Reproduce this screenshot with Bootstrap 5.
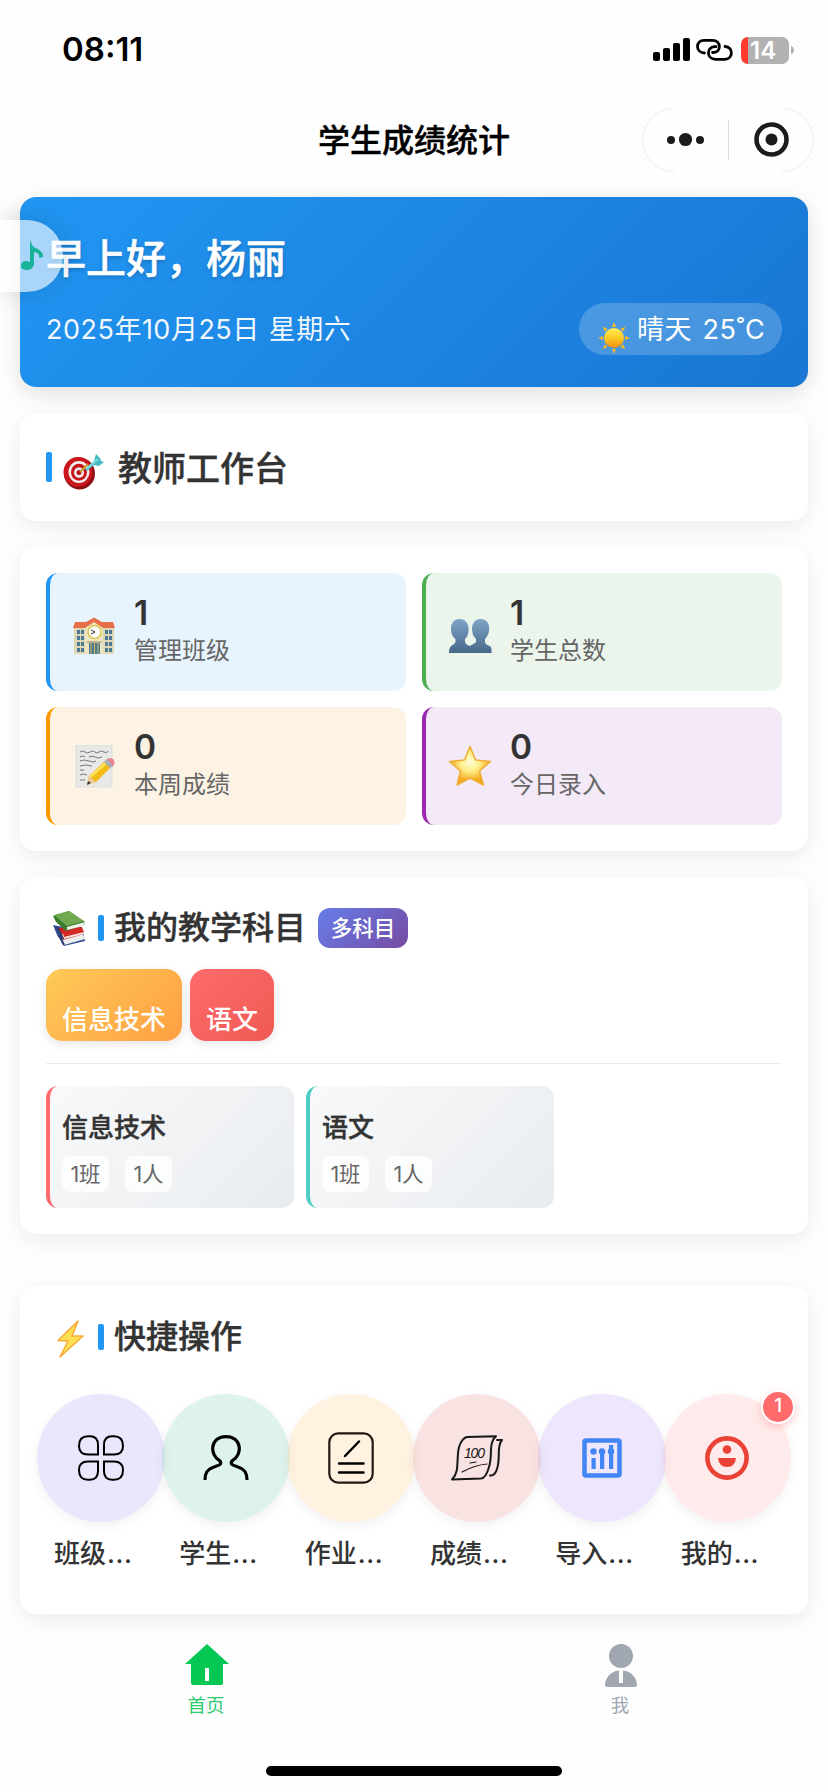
<!DOCTYPE html>
<html lang="zh-CN">
<head>
<meta charset="utf-8">
<meta name="viewport" content="width=device-width, initial-scale=1">
<title>学生成绩统计</title>
<link href="https://cdn.jsdelivr.net/npm/bootstrap@5.3.0/dist/css/bootstrap.min.css" rel="stylesheet">
<style>
body{font-family:Inter,"Noto Sans CJK SC",sans-serif;color:#333;background:#fefefe;width:828px;height:1792px;overflow:hidden;line-height:1}
svg{display:block;flex:none}
.status-bar{height:108px;padding:24px 34px 0 62px;color:#000}
.clock{font-size:33px;font-weight:600;line-height:51px;letter-spacing:0}
.status-icons{height:52px}
.link-mark{margin:0 6px 0 4px}
.battery-box{width:48px;height:27px;border-radius:7px;background:linear-gradient(90deg,#ff3b30 7px,#b2b2b2 7px);color:#fff;font-weight:600;font-size:24px;line-height:27px;padding-left:9px}
.title-bar{height:64px;padding-right:14px;display:grid;grid-template-columns:186px 1fr 172px;color:#000}
.page-title{font-size:32px;font-weight:500;-webkit-text-stroke:.4px;line-height:65px;text-align:center}
.panel{margin:0 20px 26px;border-radius:16px;padding:26px;background:#fff;box-shadow:0 6px 22px rgba(0,0,0,.075)}
.hero{margin-top:25px;height:190px;background:linear-gradient(135deg,#2196f3,#1976d2);color:#fff;box-shadow:0 6px 22px rgba(0,0,0,.13)}
.hello{font-size:40px;font-weight:500;-webkit-text-stroke:.5px;line-height:72px;text-shadow:0 2px 4px rgba(0,0,0,.22)}
.hero-date{font-size:27px;letter-spacing:.5px;word-spacing:1px;line-height:53px;margin-top:8px;color:rgba(255,255,255,.95)}
.weather{width:203px;height:52px;border-radius:26px;background:rgba(255,255,255,.2);font-size:27px;letter-spacing:.6px;word-spacing:2px;line-height:53px;padding-left:18px;margin-top:8px;white-space:nowrap}
.weather svg{margin:18px 6px 0 0}
.music-tab{left:0;top:220px;width:63px;height:72px;border-radius:0 36px 36px 0;background:rgba(255,255,255,.61);box-shadow:0 0 28px rgba(0,0,0,.13);padding:19px 0 0 20px}
.accent{width:6px;height:26px;border-radius:2px;background:#2196f3;flex:none}
.accent-lg{height:30px}
.head{height:50px;font-size:32px;font-weight:500;-webkit-text-stroke:.4px}
.head-lg{font-size:34px;line-height:50px;padding-top:2px}
.target-icon{margin:10px 12px 0 10px}
.stat-grid{display:grid;grid-template-columns:360px 360px;gap:16px}
.stat{height:118px;border-left:4px solid var(--c);border-radius:12px;background:var(--b);padding:20px 0 0 22px}
.stat svg{margin:18px 18px 0 0}
.stat svg.low{margin-top:20px}
.stat b{display:block;font-size:33.5px;font-weight:600;line-height:40px}
.stat span{display:block;font-size:24px;line-height:36px;color:#666}
.multi{width:90px;height:40px;border-radius:12px;background:linear-gradient(135deg,#667eea,#764ba2);color:#fff;font-size:21.5px;font-weight:500;-webkit-text-stroke:0;line-height:40px;text-align:center;margin-left:12px}
.subject-tag{height:72px;padding:33px 16px 0;border-radius:16px;color:#fff;font-size:26px;font-weight:500;line-height:36px;box-shadow:0 3px 10px rgba(0,0,0,.1)}
.t-info{background:linear-gradient(135deg,#feca57,#ff9f43)}
.t-lang{background:linear-gradient(135deg,#ff6b6b,#ee5a52)}
.rule{height:1px;background:#ececec;margin:22px 0}
.course{width:248px;height:122px;border-left:4px solid var(--c);border-radius:12px;background:linear-gradient(135deg,#f8f9fa,#e9ecef);padding:22px 12px 0}
.course h3{font-size:26px;font-weight:500;-webkit-text-stroke:.4px;line-height:39px;margin:0 0 9px}
.chip{width:47px;height:36px;border-radius:8px;background:rgba(255,255,255,.8);color:#666;font-size:21.5px;line-height:36px;text-align:center;white-space:nowrap}
.quick{padding:26px 18px 43px}
.quick-row{margin-top:32px}
.disc{width:128px;height:128px;border-radius:50%;margin:0 -1.5px;flex:none;box-shadow:0 4px 12px rgba(0,0,0,.055);background:var(--b)}
.quick-label{font-size:26px;font-weight:500;line-height:37px;height:36px;margin:13px 0 0 16px;align-self:flex-start}
.quick-label i{font-style:normal;letter-spacing:.6px;margin-left:1px}
.note-badge{right:-4px;top:-4px;width:34px;height:34px;border:2px solid #fff;border-radius:50%;background:#ff6b6b;color:#fff;font-size:19px;line-height:28px;font-weight:500;text-align:center;box-shadow:0 3px 8px rgba(255,107,107,.35)}
.tabs{height:152px;padding-top:4px;margin-top:26px}
.tab-item{width:414px;height:98px;font-size:18.5px;line-height:26px}
.tab-item span{margin:6px 2px 0 0}
.tab-item svg+span.me-tab{margin-top:5px}
.home-line{width:296px;height:10px;border-radius:5px;background:#000;margin:24px auto 0}
</style>
</head>
<body class="position-relative">
<header>
  <div class="status-bar d-flex justify-content-between">
    <div class="clock">08:11</div>
    <div class="status-icons d-flex align-items-center">
      <svg width="38" height="24" viewBox="0 0 38 24"><rect x="0" y="14" width="7" height="9" rx="2"/><rect x="10" y="10" width="7" height="13" rx="2"/><rect x="20" y="5" width="7" height="18" rx="2"/><rect x="30" y="0" width="7" height="23" rx="2"/></svg>
      <svg class="link-mark" width="40" height="24" viewBox="0 0 40 24" fill="none" stroke="#000" stroke-width="2.800" stroke-linecap="round"><path d="M9.500 15C0 14.500 .5 2.300 9 2.300H17.500C26.500 2.300 26.500 14.500 18.500 14.500H17.500"/><path d="M30 8.500C39 9 38 21.300 30 21.300H20.500C11.500 21.300 11 9 19.500 8.700H21"/></svg>
      <div class="battery-box">14</div>
      <svg width="5" height="10" viewBox="0 0 5 10"><path d="M2 1Q5 2 5 5T2 9Z" fill="#b2b2b2"/></svg>
    </div>
  </div>
  <div class="title-bar">
    <div></div>
    <div class="page-title">学生成绩统计</div>
    <svg width="172" height="64" viewBox="0 0 172 64"><g fill="none" stroke="#ececec"><path d="M32 .5A31.500 31.500 0 0 0 32 63.500M140 .5A31.500 31.500 0 0 1 140 63.500"/><path d="M86.500 12V52" stroke="#ddd"/></g><g fill="#1b1b1b"><circle cx="29" cy="32" r="4"/><circle cx="43.500" cy="31.500" r="6.600"/><circle cx="58" cy="32" r="4"/><circle cx="129.500" cy="31.500" r="6"/></g><circle cx="129.500" cy="31.500" r="15" fill="none" stroke="#1b1b1b" stroke-width="4.600"/></svg>
  </div>
</header>

<section class="panel hero">
  <div class="hello">早上好，杨丽</div>
  <div class="d-flex justify-content-between">
    <div class="hero-date">2025年10月25日 星期六</div>
    <div class="weather d-flex">
      <svg width="34" height="34" viewBox="0 0 34 34"><defs><linearGradient id="sun" x2="0" y2="1"><stop stop-color="#ffef55"/><stop offset=".5" stop-color="#fdca25"/><stop offset="1" stop-color="#f18b13"/></linearGradient></defs><g fill="#f6b72a"><path id="ray" d="M17 1l2 5h-4z"/><use href="#ray" transform="rotate(45 17 17)"/><use href="#ray" transform="rotate(90 17 17)"/><use href="#ray" transform="rotate(135 17 17)"/><use href="#ray" transform="rotate(180 17 17)"/><use href="#ray" transform="rotate(225 17 17)"/><use href="#ray" transform="rotate(270 17 17)"/><use href="#ray" transform="rotate(315 17 17)"/></g><circle cx="17" cy="17" r="10" fill="url(#sun)"/></svg>
      <span>晴天 25˚C</span>
    </div>
  </div>
</section>

<section class="panel d-flex align-items-center" style="height:108px">
  <div class="accent accent-lg"></div>
  <svg class="target-icon" width="44" height="38" viewBox="0 0 44 38"><ellipse cx="17.500" cy="20.500" rx="15.500" ry="16" fill="#8c1014"/><ellipse cx="16" cy="19" rx="14.500" ry="15" fill="#c9151c"/><ellipse cx="17" cy="19" rx="10.500" ry="11" fill="#f5eeee"/><ellipse cx="17" cy="19.300" rx="8" ry="8.500" fill="#c9151c"/><ellipse cx="17" cy="19.500" rx="5" ry="5.300" fill="#f5eeee"/><circle cx="17" cy="19.500" r="2.500" fill="#b5121a"/><path d="M18 19L26 11" stroke="#c99b2c" stroke-width="2"/><path d="M23 16L32 8L34 1L38 5L39 8L42 9L37 13L32 12L25 18Z" fill="#46b9c1"/><path d="M24 16L36 6" stroke="#82e0df" stroke-width="2"/></svg>
  <div class="head head-lg">教师工作台</div>
</section>

<section class="panel stat-grid">
  <div class="stat d-flex" style="--c:#2196f3;--b:#e7f4fe">
    <svg class="low" width="44" height="48" viewBox="0 0 44 48"><path d="M2 14H42V41H2Z" fill="#ded7b5"/><path d="M13 13L22 6L31 13V41H13Z" fill="#eee6c2"/><path d="M3 9H14L22 4.500L30 9H41L43 15H31L22 9L13 15H1Z" fill="#e66f49"/><g fill="#4b7895"><path d="M5 17h3v4H5zM9 17h3v4H9zM5 23h3v4H5zM9 23h3v4H9zM5 29h3v4H5zM9 29h3v4H9zM5 35h3v4H5zM9 35h3v4H9zM33 17h3v4h-3zM37 17h3v4h-3zM33 23h3v4h-3zM37 23h3v4h-3zM33 29h3v4h-3zM37 29h3v4h-3zM33 35h3v4h-3zM37 35h3v4h-3z"/><path d="M17 30H28V41H17Z"/></g><path d="M22.500 30V41M19 30V41M26 30V41" stroke="#d8b960"/><path d="M15 29H30" stroke="#bdb48b" stroke-width="2"/><circle cx="22.500" cy="19" r="6.500" fill="#fff" stroke="#dcc84e" stroke-width="1.500"/><path d="M19 17L23 19L19 21" fill="none" stroke="#333"/></svg>
    <div><b>1</b><span>管理班级</span></div>
  </div>
  <div class="stat d-flex" style="--c:#4caf50;--b:#ebf5eb">
    <svg class="low" width="44" height="48" viewBox="0 0 44 48"><defs><linearGradient id="people" x2="0" y2="1"><stop stop-color="#7da5c7"/><stop offset="1" stop-color="#476789"/></linearGradient></defs><g fill="url(#people)"><path d="M33 6C26.500 6 24 11 24 16C24 21 26 24 28 26V29C25 33 17 32 17 40H43.500V36C43 31 38 34 37 29V26C43 21 43.500 6 33 6Z"/><path d="M12 6C5 6 3 11 3 16C3 21 5 24 7.500 26V29C6 33 1 31 1 40H28.500V38C27 32 18 34 17 29V26C23 21 22 6 12 6Z"/></g></svg>
    <div><b>1</b><span>学生总数</span></div>
  </div>
  <div class="stat d-flex" style="--c:#ff9800;--b:#fdf3e5">
    <svg width="44" height="48" viewBox="0 0 44 48"><path d="M4 0H40V42H4Z" fill="#e8e8e7" stroke="#d5d5d2" stroke-width=".7"/><g fill="none" stroke="#777" stroke-width="1"><path d="M8 7q3-2 5 0t5 0 5 0 4 0 5 0 4-1"/><path d="M8 12q2-2 5 0m4 0q3-2 6 0t7 0M8 16q4-2 9 0t7 0M8 21q5-2 12 0M8 25h4M8 30q3-2 7 0M8 35h5"/></g><path d="M15 40L17 31L34 15L40 21L24 37Z" fill="#f4bb15"/><path d="M18 32L35 17" stroke="#ffe25b" stroke-width="2.500"/><path d="M34 15L37 13Q44 13 42 20L40 22Z" fill="#e88790"/><path d="M32 17L35 14L41 21L38 23Z" fill="#a7b0b8"/><path d="M15 40L17 31L24 37Z" fill="#edc99a"/><path d="M15 40L16 36L19 38Z" fill="#333"/></svg>
    <div><b>0</b><span>本周成绩</span></div>
  </div>
  <div class="stat d-flex" style="--c:#9c27b0;--b:#f4e9f7">
    <svg width="44" height="48" viewBox="0 0 44 48"><defs><radialGradient id="star" cy=".4"><stop stop-color="#fffbd9"/><stop offset=".45" stop-color="#fff18e"/><stop offset="1" stop-color="#f3a91e"/></radialGradient></defs><path d="M22 1.500L27.500 15L42.500 16.500L31.500 26L35.500 40L22 33L9 40L12.500 26L1.500 16.500L16.500 15Z" fill="url(#star)" stroke="#efad32" stroke-width="1.500" stroke-linejoin="round"/></svg>
    <div><b>0</b><span>今日录入</span></div>
  </div>
</section>

<section class="panel" style="height:357px;margin-bottom:52px">
  <div class="head d-flex align-items-center">
    <svg style="margin:1px 10px 0 6px" width="36" height="36" viewBox="0 0 36 36"><path d="M1 14L5 24L12 35L33 30L31 20Z" fill="#354f91"/><path d="M7 27L31 23L33 28L12 34Z" fill="#eee"/><path d="M5 17L30 16L32 23L11 29Z" fill="#c52520"/><path d="M10 23L31 19L32 23L12 28Z" fill="#f3e9e2"/><path d="M10 18L30 17L32 21L12 26Z" fill="#d22a24"/><path d="M7 24L12 34M5 16L11 28" stroke="#2b3b75" stroke-width="2"/><path d="M1 5L17 0L33 11L32 14L14 20L4 11Z" fill="#3a7b2e"/><path d="M2 4L17 0L32 10L15 15Z" fill="#6faa50"/><path d="M15 16L33 11L31 15L15 19Z" fill="#f4f4e8"/></svg>
    <div class="accent"></div>
    <span style="margin-left:10px">我的教学科目</span>
    <div class="multi">多科目</div>
  </div>
  <div class="d-flex gap-2 mt-3">
    <div class="subject-tag t-info">信息技术</div>
    <div class="subject-tag t-lang">语文</div>
  </div>
  <div class="rule"></div>
  <div class="d-flex" style="gap:12px">
    <div class="course" style="--c:#ff6b6b"><h3>信息技术</h3><div class="d-flex gap-3"><span class="chip">1班</span><span class="chip">1人</span></div></div>
    <div class="course" style="--c:#4ecdc4"><h3>语文</h3><div class="d-flex gap-3"><span class="chip">1班</span><span class="chip">1人</span></div></div>
  </div>
</section>

<section class="panel quick mb-0">
  <div class="head d-flex align-items-center ps-2">
    <svg style="margin:3px 13px 0 9px" width="30" height="40" viewBox="0 0 30 40"><path d="M23 2L3 21.500L13 22L5 38L28 17L17 17Z" fill="#ffe052" stroke="#f7aa35" stroke-width="1.500" stroke-linejoin="round"/></svg>
    <div class="accent"></div>
    <span style="margin-left:10px">快捷操作</span>
  </div>
  <div class="row g-0 quick-row">
    <div class="col-2 d-flex flex-column align-items-center">
      <div class="disc d-flex align-items-center justify-content-center" style="--b:rgba(108,92,231,.15)"><svg width="46" height="46" viewBox="0 0 46 46" fill="none" stroke="#000" stroke-width="2"><path id="leaf" d="M10 1.300H12Q20 1.300 20 10V19.500H10Q1 19.500 1 11Q1 1.300 10 1.300Z"/><use href="#leaf" transform="matrix(-1 0 0 1 46 0)"/><use href="#leaf" transform="matrix(1 0 0 -1 0 46)"/><use href="#leaf" transform="rotate(180 23 23)"/></svg></div>
      <div class="quick-label">班级<i>...</i></div>
    </div>
    <div class="col-2 d-flex flex-column align-items-center">
      <div class="disc d-flex align-items-center justify-content-center" style="--b:rgba(0,160,110,.125)"><svg width="46" height="46" viewBox="0 0 46 46" fill="none" stroke="#000" stroke-width="3.200"><path d="M2 45C2 38 4 34 11 32C17 30 19 29 17 26C6 20 7 1.600 23 1.600S40 20 29 26C27 29 29 30 35 32C42 34 44 38 44 45"/></svg></div>
      <div class="quick-label">学生<i>...</i></div>
    </div>
    <div class="col-2 d-flex flex-column align-items-center">
      <div class="disc d-flex align-items-center justify-content-center" style="--b:rgba(255,159,28,.135)"><svg width="46" height="52" viewBox="0 0 46 52" fill="none" stroke="#000" stroke-width="2.500" stroke-linecap="round"><rect x="1.300" y="1.300" width="43.400" height="49.400" rx="9" stroke="#231815" stroke-width="2.200"/><path d="M31 9.500L17 24M11 31.500H35.500M11 40.500H35.500"/></svg></div>
      <div class="quick-label">作业<i>...</i></div>
    </div>
    <div class="col-2 d-flex flex-column align-items-center">
      <div class="disc d-flex align-items-center justify-content-center" style="--b:rgba(214,58,49,.14)"><svg width="54" height="46" viewBox="0 0 54 46" fill="none" stroke="#171717" stroke-width="2" stroke-linecap="round" stroke-linejoin="round"><path d="M17 2L46 1.300C38 8 43 20 39 32Q36 43 31 43.500L2 44.500C10 37 6 24 9 12Q12 3 17 2ZM47 5H52C46 12 51 22 47 34Q45 41 40 40.500"/><path d="M12 37Q25 30 37 29M20 28L26 27" stroke-width="1.200"/><text x="14" y="23" font-family="Liberation Sans" font-style="italic" font-size="14" textLength="21" stroke="none" fill="#171717">100</text></svg></div>
      <div class="quick-label">成绩<i>...</i></div>
    </div>
    <div class="col-2 d-flex flex-column align-items-center">
      <div class="disc d-flex align-items-center justify-content-center" style="--b:rgba(124,77,237,.14)"><svg width="40" height="40" viewBox="0 0 40 40" fill="#4285f4"><rect x="2.500" y="2.500" width="35" height="35" rx="1.500" fill="none" stroke="#4285f4" stroke-width="4.500"/><circle cx="11.500" cy="13.500" r="3.200"/><circle cx="20" cy="13.500" r="3.200"/><circle cx="29" cy="13.500" r="3.200"/><path d="M9.500 20h4.200v11H9.500zM18 14h4.200v17H18zM27 7h4.200v24H27z"/></svg></div>
      <div class="quick-label">导入<i>...</i></div>
    </div>
    <div class="col-2 d-flex flex-column align-items-center">
      <div class="disc position-relative d-flex align-items-center justify-content-center" style="--b:rgba(255,107,107,.135)"><svg width="44" height="44" viewBox="0 0 44 44" fill="#ea4335"><circle cx="22" cy="22" r="19.600" fill="none" stroke="#ea4335" stroke-width="4.600"/><circle cx="22" cy="13.500" r="4.300"/><path d="M13 22H31Q30 31 22 31T13 22Z"/></svg><span class="note-badge position-absolute">1</span></div>
      <div class="quick-label">我的<i>...</i></div>
    </div>
  </div>
</section>

<nav class="tabs">
  <div class="d-flex">
    <div class="tab-item d-flex flex-column align-items-center" style="color:#2dca70">
      <svg width="44" height="42" viewBox="0 0 44 42"><path d="M22 0L44 20H38V39Q38 41 36 41H8Q6 41 6 39V20H0ZM20 24V37H24V24Z" fill="#04c754" fill-rule="evenodd"/></svg>
      <span>首页</span>
    </div>
    <div class="tab-item d-flex flex-column align-items-center" style="color:#a0a7b0">
      <svg width="32" height="43" viewBox="0 0 32 43"><circle cx="16" cy="12" r="12" fill="#a0a7b0"/><path d="M14 26.500V39H18V26.500C27 27 32 35 32 41Q32 43 30 43H2Q0 43 0 41C0 35 5 27 14 26.500Z" fill="#a0a7b0"/></svg>
      <span class="me-tab">我</span>
    </div>
  </div>
  <div class="home-line"></div>
</nav>

<aside class="music-tab position-absolute">
  <svg width="25" height="34" viewBox="0 0 25 34"><path d="M11 2Q11 8 18 10Q24 14 23 18L19 19Q20 14 14 13V26Q12 31 7 31Q1 31 1 27Q1 22 7 22L10 23V3Z" fill="#18b29b"/></svg>
</aside>
<script src="https://cdn.jsdelivr.net/npm/bootstrap@5.3.0/dist/js/bootstrap.bundle.min.js"></script>
</body>
</html>
